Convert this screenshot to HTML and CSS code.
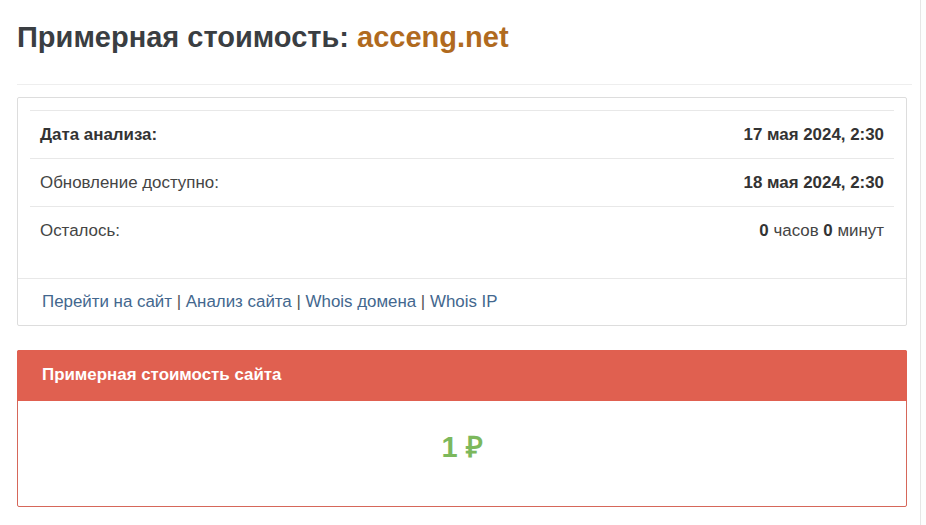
FILE: index.html
```html
<!DOCTYPE html>
<html lang="ru">
<head>
<meta charset="utf-8">
<title>Примерная стоимость: acceng.net</title>
<link rel="stylesheet" href="styles.css">
</head>
<body>
<div class="page">
  <main class="main">
    <h1 class="title">Примерная стоимость: <span class="domain">acceng.net</span></h1>
    <hr class="rule">
    <section class="panel">
      <div class="panel-body">
        <table class="info">
          <tr>
            <td><b>Дата анализа:</b></td>
            <td class="right"><b>17 мая 2024, 2:30</b></td>
          </tr>
          <tr>
            <td>Обновление доступно:</td>
            <td class="right"><b>18 мая 2024, 2:30</b></td>
          </tr>
          <tr class="last">
            <td>Осталось:</td>
            <td class="right"><b>0</b> часов <b>0</b> минут</td>
          </tr>
        </table>
      </div>
      <div class="panel-footer">
        <a href="#">Перейти на сайт</a> | <a href="#">Анализ сайта</a> | <a href="#">Whois домена</a> | <a href="#">Whois IP</a>
      </div>
    </section>
    <section class="panel panel-red">
      <div class="panel-heading">Примерная стоимость сайта</div>
      <div class="price-body"><span class="price">1 ₽</span></div>
    </section>
  </main>
  <aside class="side"></aside>
</div>
</body>
</html>
```

FILE: styles.css
```css
* { box-sizing: border-box; }
html, body { margin: 0; padding: 0; background: #fff; }
body {
  font-family: "Liberation Sans", Arial, sans-serif;
  font-size: 16.9px;
  color: #444;
}
.page {
  display: flex;
  min-height: 525px;
}
.main {
  width: 921px;
  padding: 0 13px 0 17px;
  border-right: 1px solid #e6e6e6;
}
.side { flex: 1; background: #fdfdfd; }
.title {
  margin: 0;
  padding: 20px 0 0;
  height: 84px;
  font-size: 29px;
  font-weight: bold;
  color: #3a3e42;
  line-height: 34px;
}
.domain { color: #b06a1e; }
.rule {
  margin: 0 -5px 12px 0;
  border: 0;
  border-top: 1px solid #eeeeee;
}
.panel {
  border: 1px solid #dddddd;
  border-radius: 2px;
  background: #fff;
  margin-bottom: 24px;
}
.panel-body {
  padding: 12px 12px 24px;
}
.info {
  width: 100%;
  border-collapse: collapse;
}
.info td {
  border-top: 1px solid #e8e8e8;
  padding: 13px 10px;
  line-height: 21px;
  height: 47px;
}
.info .right { text-align: right; }
.info b { color: #333; }
.panel-footer {
  border-top: 1px solid #e8e8e8;
  padding: 12px 24px 14px 24px;
  line-height: 21px;
  height: 47px;
  color: #555;
}
.panel-footer a { color: #43678e; text-decoration: none; }
.panel-red { border-color: #d6675a; }
.panel-heading {
  background: #e06050;
  color: #fff;
  font-weight: bold;
  padding: 15px 25px;
  line-height: 20px;
  height: 51px;
  margin: -1px -1px 0;
  border-radius: 2px 2px 0 0;
}
.price-body {
  height: 105px;
  padding-bottom: 17px;
  display: flex;
  align-items: center;
  justify-content: center;
}
.price {
  font-size: 29px;
  font-weight: bold;
  color: #7cb85c;
}
```
